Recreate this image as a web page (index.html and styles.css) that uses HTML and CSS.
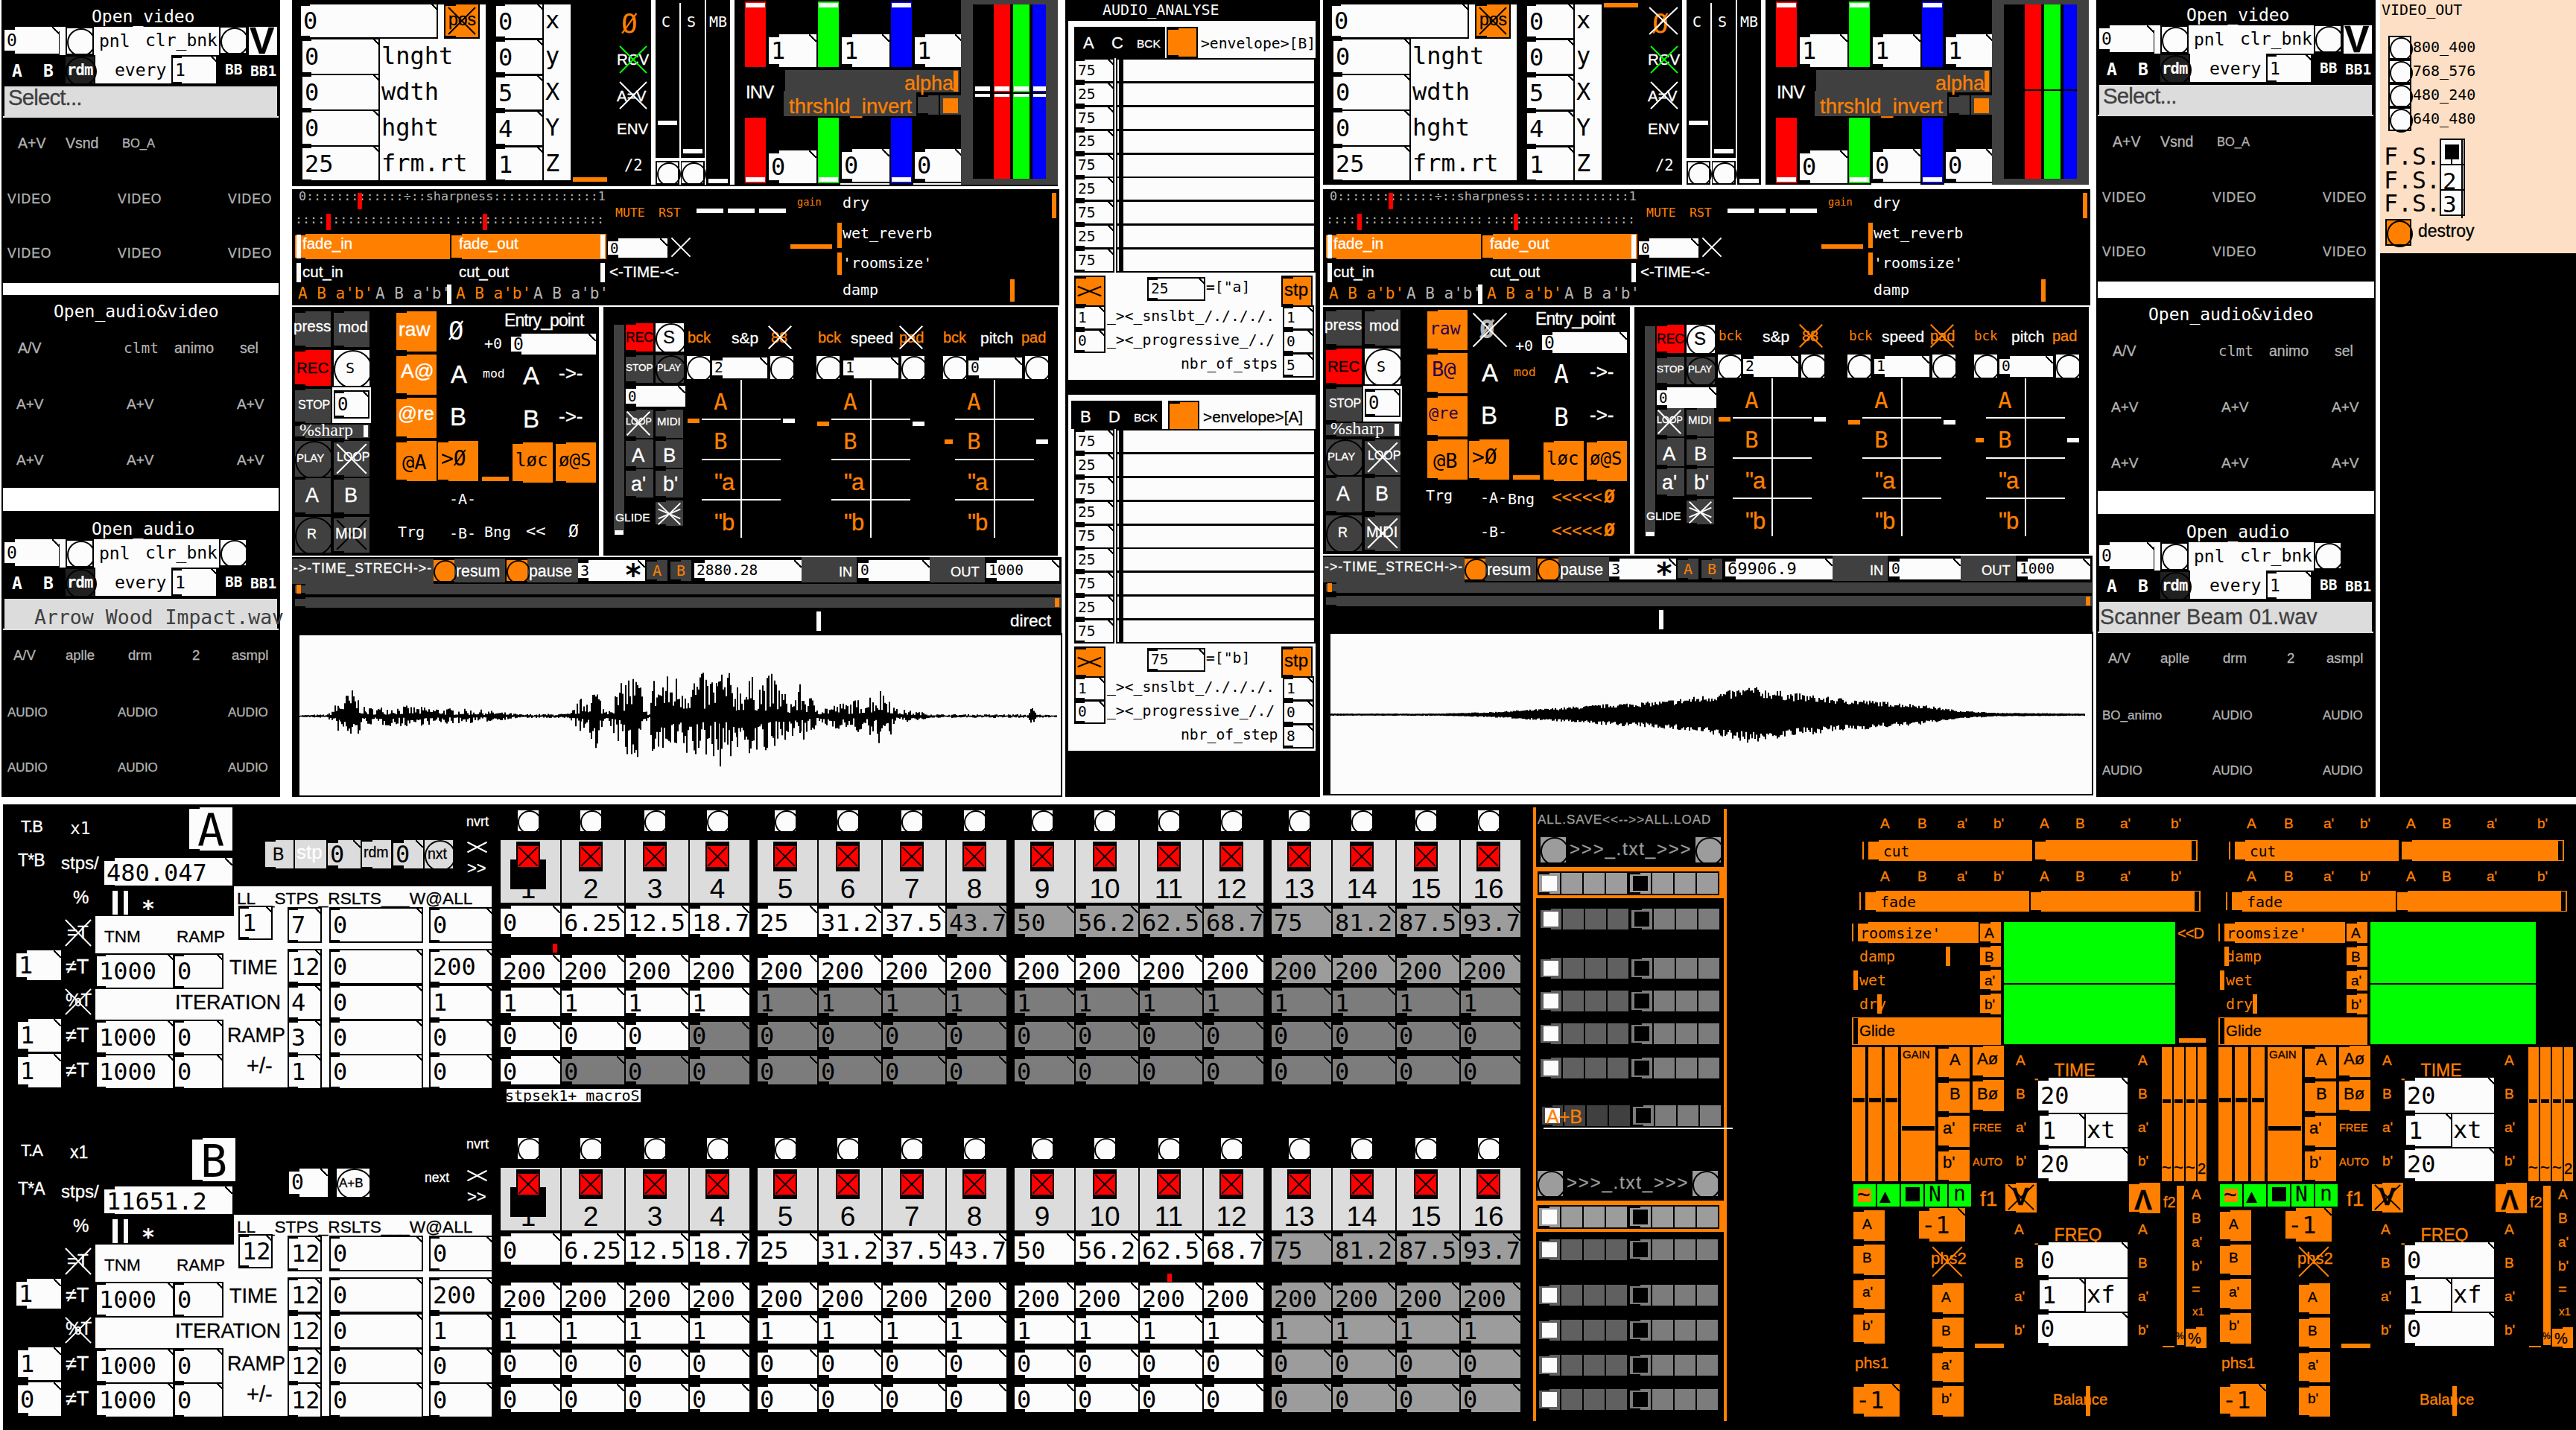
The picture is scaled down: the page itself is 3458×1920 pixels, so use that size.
FILE: index.html
```html
<!DOCTYPE html>
<html lang="en">
<head>
<meta charset="utf-8">
<title>Video / audio patch</title>
<link rel="stylesheet" href="styles.css">
</head>
<body>
<main class="desk">
  <div class="upper">
    <aside class="media" id="mediaA"></aside>
    <section class="channel" id="chanA"></section>
    <section class="analyse" id="analyse"></section>
    <section class="channel channel-b" id="chanB"></section>
    <aside class="media media-b" id="mediaB"></aside>
    <aside class="output" id="output"></aside>
  </div>
  <div class="lower">
    <div class="seqs">
      <section class="seq" id="seqA"></section>
      <section class="seq seq-b" id="seqB"></section>
    </div>
    <section class="presets" id="presets"></section>
    <section class="synth" id="synthA"></section>
    <section class="synth" id="synthB"></section>
  </div>
</main>
<script src="patch.js"></script>
</body>
</html>
```
FILE: styles.css
```css
* { box-sizing: border-box; }
body { margin: 0; background: #fff; width: 3458px; height: 1920px; overflow: hidden; }
.desk { display: flex; flex-direction: column; gap: 10px; width: 3458px; height: 1920px; overflow: hidden; }
.upper { display: flex; height: 1070px; flex: none; padding-left: 2px; }
.lower { display: flex; height: 840px; flex: none; margin-left: 4px; background: #000; }

.media { width: 374px; margin-right: 16px; display: flex; flex-direction: column; background: #000; }
.media-b { width: 375px; margin-right: 6px; }
.media .bar { background: #fff; margin: 0 2px; flex: none; }
.channel { width: 1034px; margin-right: 4px; display: flex; flex-direction: column; }
.channel .split { display: flex; gap: 6px; }
.analyse { width: 342px; margin-right: 4px; background: #000; }
.output { width: 263px; background: #000; }
.seqs { width: 2050px; display: flex; flex-direction: column; }
.seq { display: flex; height: 440px; }
.seq-b { height: 400px; }
.presets { width: 416px; }
.synth { width: 492px; }
.area { position: relative; background: #000; overflow: hidden; flex: none; }
.area.open { overflow: visible; }
.area > * { position: absolute; }

/* text */
.t { white-space: pre; line-height: 1; color: #fff; }
.s { font-family: "Liberation Sans", Arial, sans-serif; -webkit-text-stroke: .3px currentColor; }
.m, .num, .tag { font-family: "DejaVu Sans Mono", monospace; }
.serif { font-family: "Liberation Serif", serif; }
.bold { font-weight: bold; }
.ls1 { letter-spacing: 1px; }
.ls2 { letter-spacing: 1.8px; }
.lsn { letter-spacing: -.9px; }

/* fills */
.k { background-color: #000; }
.w { background-color: #fcfcfc; }
.o { background-color: #ff8000; }
.g { background-color: #404040; }
.g2 { background-color: #7c7c7c; }
.g3 { background-color: #9c9c9c; }
.g4 { background-color: #dcdcdc; }
.g5 { background-color: #606060; }
.g6 { background-color: #202020; }
.r { background-color: #f00; }
.gr { background-color: #0f0; }
.bl { background-color: #00f; }
.pe { background-color: #fcdfc4; }

/* boxes with the small inlet and outlet notches */
.pad {
  background-image: linear-gradient(#000, #000), linear-gradient(#000, #000);
  background-size: 14px 2px, 14px 2px;
  background-position: 0 0, 0 100%;
  background-repeat: no-repeat;
}
.num {
  display: flex; align-items: center; padding-left: 3px; overflow: hidden; white-space: pre; color: #000; line-height: 1;
  background-image:
    linear-gradient(#000, #000), linear-gradient(#000, #000),
    linear-gradient(to top right, transparent 43%, #000 43%, #000 57%, transparent 57%);
  background-size: 14px 4px, 14px 4px, 10px 10px;
  background-position: 0 0, 0 100%, 100% 0;
  background-origin: border-box;
  background-repeat: no-repeat;
}
.bd { border: 2px solid #000; }
.bng::after { content: ""; display: block; width: 100%; height: 100%; border: 2px solid #000; border-radius: 50%; }
.x { color: #fff; overflow: visible; }
.x line { stroke: currentColor; stroke-width: 2; }
.x.grn { color: #0f0; }

/* text and stroke colours */
.ck { color: #000; }
.co { color: #ff8000; }
.cg { color: #b4b4b4; }
.cd { color: #404040; }
.cp { color: #9c9c9c; }
.cv { color: #2d004b; }

/* step sequencer */
.bank { display: flex; gap: 11px; padding-top: 8px; }
.quad { display: grid; grid-template-columns: 80px 84px 84px 80px; column-gap: 2px; grid-template-rows: 40px 88px 66px 44px 46px 46px 38px; align-items: start; width: 334px; }
.quad .bng { width: 28px; height: 28px; justify-self: center; margin-right: 6px; }
.step { height: 84px; display: flex; flex-direction: column; align-items: center; justify-content: space-between; font: 37px/36px "Liberation Sans", Arial, sans-serif; padding: 2px 6px 0 0; }
.step .led { width: 32px; height: 40px; background: #000; padding: 6px 2px; }
.step .led svg { display: block; width: 28px; height: 28px; background: #f00; }
.led line { stroke: #000; stroke-width: 2; }
.step.on .led { box-shadow: 0 24px 0 0 #000, 8px 24px 0 0 #000, -8px 24px 0 0 #000; }
.quad .num { height: 38px; font-size: 32px; }
.quad .val { height: 42px; padding-top: 4px; }
.quad .dur { padding-top: 6px; }
.quad .itr { padding-top: 3px; }

/* preset strips */
.strip { display: flex; gap: 2px; height: 28px; }
.strip i { width: 28px; height: 28px; padding: 4px; }
.strip i:nth-child(5) { margin-left: 2px; }
.strip i b { display: block; width: 20px; height: 20px; }

/* analyser rows */
.rows { display: flex; flex-direction: column; }
.rows > div { display: flex; gap: 2px; height: 31.9px; }
.rows .num { width: 54px; font-size: 19.5px; height: 33px; }
.rows .track { width: 268px; height: 33px; padding-left: 2px; }
.rows .track i { display: block; width: 6px; height: 100%; background: #000; }
.wave { stroke: #000; stroke-width: 2; fill: none; }
```
FILE: patch.js
```js
// Small drawing kit for a patch canvas: coordinates are those of the whole desk,
// every area subtracts its own origin.
const SVG = 'http://www.w3.org/2000/svg';
function area(parent, w, h, ox, oy) {
  const el = document.createElement('div');
  el.className = 'area';
  el.style.width = w + 'px';
  el.style.height = h + 'px';
  parent.append(el);
  const put = (e, x1, y1, x2, y2) => {
    e.style.left = (x1 - ox) + 'px';
    e.style.top = (y1 - oy) + 'px';
    if (x2 !== undefined) {
      e.style.width = (x2 - x1) + 'px';
      e.style.height = (y2 - y1) + 'px';
    }
    el.append(e);
    return e;
  };
  const div = cls => {
    const e = document.createElement('div');
    e.className = cls;
    return e;
  };
  const p = {
    el, put, div,
    r: (x1, y1, x2, y2, cls) => put(div(cls), x1, y1, x2, y2),
    pad: (x1, y1, x2, y2, cls) => put(div('pad ' + cls), x1, y1, x2, y2),
    c: (x1, y1, x2, y2, cls = 'w') => put(div('bng ' + cls), x1, y1, x2, y2),
    n: (x1, y1, x2, y2, v, size = 32, cls = 'w') => {
      const e = put(div('num ' + cls), x1, y1, x2, y2);
      e.textContent = v;
      e.style.fontSize = size + 'px';
      return e;
    },
    t: (x, base, size, str, cls = 's') => {
      const e = put(div('t ' + cls), x, base - .846 * size);
      e.textContent = str;
      e.style.fontSize = size + 'px';
      return e;
    },
    x: (x1, y1, x2, y2, cls = '') => {
      const s = cross();
      s.setAttribute('class', 'x ' + cls);
      return put(s, x1, y1, x2, y2);
    }
  };
  return p;
}
function cross() {
  const s = document.createElementNS(SVG, 'svg');
  s.setAttribute('viewBox', '0 0 20 20');
  s.setAttribute('preserveAspectRatio', 'none');
  for (const [a, b] of [[1, 19], [19, 1]]) {
    const l = document.createElementNS(SVG, 'line');
    l.setAttribute('x1', 1); l.setAttribute('x2', 19);
    l.setAttribute('y1', a); l.setAttribute('y2', b);
    l.setAttribute('vector-effect', 'non-scaling-stroke');
    s.append(l);
  }
  return s;
}
const $ = id => document.getElementById(id);
function bar(parent, h) {
  const e = document.createElement('div');
  e.className = 'bar';
  e.style.height = h + 'px';
  parent.append(e);
}

/* ---------- file pickers ---------- */
function picker(p, title, tx, last) {
  p.t(tx, 30, 23, title, 'm');
  p.r(80, 36, 88, 74, 'w');
  p.n(6, 36, 80, 72, '0', 23);
  p.r(79, 42, 80, 72, 'k');
  p.c(90, 38, 124, 72);
  p.r(126, 36, 294, 74, 'w');
  p.r(128, 74, 230, 112, 'w');
  p.t(133, 63, 23, 'pnl', 'm ck');
  p.t(195, 62, 23, 'clr_bnk', 'm ck');
  p.c(296, 37, 330, 71);
  if (last) {
    p.r(334, 36, 372, 74, 'w');
    p.t(335, 72, 50, 'V', 's bold ck');
  }
  p.t(16, 103, 23, 'A', 'm bold');
  p.t(58, 103, 23, 'B', 'm bold');
  p.c(88, 76, 126, 112, 'g6');
  p.t(90, 101, 20.5, 'rdm', 'm bold lsn');
  p.t(154, 102, 23, 'every', 'm ck');
  p.n(230, 74, 292, 114, '1', 23, 'w bd');
  p.t(302, 100, 19.5, 'BB', 'm bold');
  p.t(336, 102, 19.5, 'BB1', 'm bold');
  p.r(4, 156, 374, 158, 'w');
  p.r(6, 116, 372, 158, 'g4');
}
function media(el, ox, h, file, isB) {
  let p = area(el, isB ? 375 : 374, h[0], 2, isB ? 2 : 0);
  picker(p, 'Open_video', 123, true);
  p.t(11, 141, 29.5, 'Select...', 's cd lsn');
  p.t(24, 199, 19.5, 'A+V', 's cg');
  p.t(88, 199, 19.5, 'Vsnd', 's cg');
  p.t(164, 198, 16.5, 'BO_A', 's cg');
  for (const y of [274, 347]) for (const x of [10, 158, 306]) p.t(x, y, 17.5, 'VIDEO', 's cg ls1');
  bar(el, h[1]);
  p = area(el, isB ? 375 : 374, h[2], 2, 396);
  p.t(72, 426, 23, 'Open_audio&video', 'm');
  p.t(24, 474, 19.5, 'A/V', 's cg');
  p.t(166, 474, 19.5, 'clmt', 'm cg');
  p.t(234, 474, 19.5, 'animo', 's cg');
  p.t(322, 474, 19.5, 'sel', 's cg');
  for (const y of [549, 624]) for (const x of [22, 170, 318]) p.t(x, y, 19, 'A+V', 's cg');
  bar(el, h[3]);
  p = area(el, isB ? 375 : 374, h[4], 2, -2);
  p.el.classList.add('open');
  picker(p, 'Open_audio', 123, false);
  if (isB) p.t(7, 147, 29, file, 's cd');
  else p.t(46, 150, 26.5, file, 'm cd');
  [['A/V', 18], ['aplle', 88], ['drm', 172], ['2', 258], ['asmpl', 311]].forEach(([s, x]) => p.t(x, 199, 18.5, s, 's cg'));
  for (const y of [274, 348]) for (const x of [10, 158, 306])
    p.t(x, y, 17, isB && x === 10 && y === 274 ? 'BO_animo' : 'AUDIO', 's cg');
}
media($('mediaA'), 0, [380, 16, 259, 31, 384], 'Arrow Wood Impact.wav', false);
media($('mediaB'), 0, [378, 22, 259, 31, 380], 'Scanner Beam 01.wav', true);

/* ---------- channels ---------- */
function channel(el, isB) {
  // video parameters
  let p = area(el, 1028, isB ? 248 : 250, 392, 0);
  p.r(404, 6, 652, 242, 'w');
  p.n(402, 4, 588, 52, '0', 32, 'w bd');
  p.pad(596, 4, 644, 52, 'o bd');
  p.t(602, 34, 23, 'pos', 's ck');
  p.x(600, 8, 640, 48, 'ck');
  p.r(402, 52, 406, 244, 'k');
  ['lnght', 'wdth', 'hght', 'frm.rt'].forEach((s, i) => {
    p.n(404, 51 + i * 48, 510, 101 + i * 48, i === 3 ? '25' : '0', 32, 'w bd');
    p.t(512, 86 + i * 48, 32, s, 'm ck');
  });
  p.r(666, 6, 766, 242, 'w');
  ['x', 'y', 'X', 'Y', 'Z'].forEach((s, i) => {
    p.n(664, 4 + i * 48, 730, 53 + i * 48, '00541'[i], 32, 'w bd');
    p.t(732, 38 + i * 48, 32, s, 'm ck');
  });
  p.r(402, 242, 768, 250, 'k');
  if (isB) p.r(769, 4, 815, 10, 'o'); else p.r(769, 238, 815, 244, 'o');
  p.t(834, 44, 36, 'Ø', 'm co');
  if (isB) p.x(828, 8, 870, 48);
  p.t(828, 87, 20.5, 'RCV');
  p.x(830, 60, 870, 100, 'grn');
  p.t(828, 136, 20.5, 'A=V');
  p.x(830, 108, 870, 148);
  p.t(828, 180, 20.5, 'ENV');
  p.t(838, 229, 20.5, '/2', 'm');
  p.r(874, 0, 880, 248, 'w');
  p.t(888, 36, 20, 'C', 'm'); p.t(922, 36, 20, 'S', 'm'); p.t(952, 36, 20, 'MB', 'm');
  p.r(912, 4, 914, 248, 'w'); p.r(946, 0, 948, 248, 'w'); p.r(980, 0, 986, 248, 'w');
  p.r(883, 162, 909, 168, 'w'); p.r(917, 200, 943, 206, 'w'); p.r(951, 240, 977, 246, 'w');
  p.r(880, 212, 947, 216, 'w');
  p.c(882, 218, 910, 246); p.c(915, 218, 944, 246);
  [['r', 1000], ['gr', 1098], ['bl', 1196]].forEach(([c, x], i) => {
    p.r(x, 2, x + 28, 90, c); p.r(x + 1, 4, x + 27, 10, 'w');
    p.r(x, 158, x + 28, 246, c); p.r(x + 1, 238, x + 27, 244, 'w');
    p.n(x + 32, 46, x + 96, 90, '1', 32);
    p.n(x + 32, i ? 200 : 202, x + 96, i ? 244 : 246, '0', 32);
    if (i) p.r(x + 30, 246, x + 96, 248, 'w');
  });
  p.t(1001, 132, 24, 'INV', 's lsn');
  p.r(1054, 94, 1288, 124, 'g'); p.r(1052, 122, 1230, 156, 'g');
  p.t(1214, 122, 27, 'alpha', 's co'); p.t(1059, 152, 27.5, 'thrshld_invert', 's co');
  p.pad(1232, 128, 1260, 154, 'g'); p.r(1262, 128, 1290, 154, 'g'); p.r(1266, 132, 1286, 152, 'o');
  p.r(1280, 95, 1286, 123, 'o');
  p.r(1290, 0, 1420, 248, 'g'); p.r(1306, 6, 1404, 240, 'k');
  p.r(1334, 6, 1356, 240, 'r'); p.r(1360, 6, 1382, 240, 'gr'); p.r(1386, 6, 1404, 240, 'bl');
  if (!isB) {
    p.r(1334, 124, 1404, 126, 'k');
    for (const [a, b] of [[1309, 1329], [1335, 1355], [1361, 1381], [1387, 1404]]) { p.r(a, 116, b, 122, 'w'); p.r(a, 126, b, 130, 'w'); }
  } else p.r(1334, 120, 1404, 122, 'k');
  bar(el, isB ? 6 : 4);

  // audio parameters
  p = area(el, 1030, 156, 392, 254);
  p.t(401, 269, 16.7, '0:::::::::::::÷::sharpness::::::::::::::1', 'm cg');
  p.t(396, 300, 16.7, ':::::::::::::::::::::', 'm cg');
  p.t(610, 300, 16.7, '::::::::::::::::::::', 'm cg');
  p.r(480, 259, 486, 281, 'r'); p.r(438, 287, 444, 309, 'r'); p.r(648, 287, 654, 309, 'r');
  p.pad(396, 314, 604, 348, 'o'); p.pad(606, 314, 814, 348, 'o');
  for (const x of [398, 806]) { p.r(x, 315, x + 6, 347, 'w'); p.r(x, 353, x + 6, 379, 'w'); }
  p.t(406, 334, 20.5, 'fade_in'); p.t(616, 334, 20.5, 'fade_out');
  p.t(406, 372, 20.5, 'cut_in'); p.t(616, 372, 20.5, 'cut_out');
  p.r(600, 382, 606, 408, 'w');
  for (const x of [400, 612]) { p.t(x, 402, 21, "A B a'b'", 'm co'); p.t(x + 104, 402, 21, "A B a'b'", 'm cg'); }
  p.t(826, 292, 16.5, 'MUTE', 'm co'); p.t(884, 292, 16.5, 'RST', 'm co');
  p.n(816, 320, 896, 346, '0', 19); p.x(900, 318, 928, 346);
  p.t(818, 372, 20.5, '<-TIME-<-');
  for (const x of [935, 977, 1019]) p.r(x, 280, x + 36, 286, 'w');
  p.t(1070, 276, 13.5, 'gain', 'm co');
  p.r(1061, 328, 1117, 334, 'o'); p.r(1124, 299, 1130, 333, 'o'); p.r(1124, 339, 1130, 369, 'o');
  p.t(1131, 279, 20, 'dry', 'm'); p.t(1131, 320, 20, 'wet_reverb', 'm');
  p.t(1131, 360, 20, "'roomsize'", 'm'); p.t(1131, 396, 20, 'damp', 'm');
  p.r(1412, 259, 1418, 293, 'o'); p.r(1356, 375, 1362, 405, 'o');
  bar(el, 2);

  // recorder and pitch/speed decks
  const split = document.createElement('div');
  split.className = 'split';
  el.append(split);
  const H = isB ? 332 : 334, oy = isB ? 414 : 412;
  p = area(split, 412, H, 392, oy);
  p.pad(396, 418, 444, 466, 'g'); p.pad(448, 418, 496, 466, 'g');
  p.pad(396, 470, 444, 518, 'r'); p.c(448, 470, 496, 518);
  p.pad(396, 522, 444, 568, 'g'); p.r(446, 520, 498, 568, 'w'); p.n(448, 524, 496, 562, '0', 24, 'w bd');
  p.pad(396, 570, 496, 588, 'g'); p.t(402, 585, 24, '%sharp', 'serif'); p.r(488, 571, 494, 587, 'w');
  p.c(396, 592, 444, 640, 'g'); p.pad(448, 592, 496, 640, 'g'); p.x(450, 594, 494, 638);
  p.pad(396, 642, 444, 690, 'g'); p.pad(448, 642, 496, 690, 'g');
  p.c(396, 694, 444, 742, 'g'); p.pad(448, 694, 496, 742, 'g');
  p.x(450, 696, 494, 740, isB ? '' : 'ck');
  p.t(394, 445, 20.5, 'press'); p.t(454, 446, 20.5, 'mod'); p.t(398, 501, 20.5, 'REC', 's ck');
  p.t(464, 501, 20, 'S', 'm ck'); p.t(400, 550, 16, 'STOP'); p.t(398, 620, 15, 'PLAY'); p.t(452, 620, 16, 'LOOP');
  p.t(410, 675, 27, 'A'); p.t(462, 675, 27, 'B'); p.t(412, 723, 18, 'R'); p.t(450, 723, 20, 'MIDI');
  const lab = isB ? 'm cv' : 's';
  for (const y of [418, 476, 534, 592]) p.pad(532, y, 586, y + 54, 'o');
  p.pad(588, 592, 642, 646, 'o'); p.r(647, 640, 683, 646, 'o');
  p.pad(688, 594, 742, 648, 'o'); p.pad(746, 594, 800, 648, 'o');
  const ls = isB ? 23 : 26.5;
  p.t(535, 451, ls, 'raw', lab); p.t(538, 507, isB ? 27 : 26.5, isB ? 'B@' : 'A@', lab); p.t(534, 565, ls - 1, '@re', lab);
  p.t(540, 630, 27, isB ? '@B' : '@A', 'm ck'); p.t(592, 626, 28, '>Ø', 'm ck');
  p.t(692, 626, 24, 'løc', 'm ck'); p.t(750, 626, 24, 'ø@S', 'm ck');
  p.t(602, 456, 34, 'Ø', isB ? 'm cg bold' : 'm');
  if (isB) p.x(591, 420, 641, 470);
  p.t(605, 514, 33, 'A'); p.t(604, 571, 33, 'B');
  p.t(650, isB ? 473 : 468, 20, '+0', 'm'); p.t(648, 508, 16.5, 'mod', isB ? 'm co' : 'm');
  p.t(677, 438, 23, 'Entry_point', 's lsn'); p.n(686, 448, 800, 476, '0', 23);
  p.t(702, 516, 33, 'A', isB ? 'm' : 's'); p.t(702, 574, 33, 'B', isB ? 'm' : 's');
  p.t(750, 510, 26, '->-'); p.t(750, 568, 26, '->-');
  p.t(603, 677, 20, '-A-', 'm'); p.t(603, 723, 20, '-B-', 'm');
  if (isB) {
    p.t(530, 674, 20, 'Trg', 'm'); p.t(640, 679, 20, 'Bng', 'm');
    for (const y of [677, 722]) { p.t(699, y, 22.5, '<<<<<', 'm co'); p.t(769, y, 25, 'Ø', 'm co bold'); }
  } else {
    p.t(534, 721, 20, 'Trg', 'm'); p.t(650, 721, 20, 'Bng', 'm'); p.t(706, 721, 22, '<<', 'm'); p.t(763, 721, 23, 'Ø', 'm');
  }

  p = area(split, 610, H, 810, oy);
  const d = isB ? 4 : 0;
  p.r(824, 436 + d, 838, 712 + d, 'g'); p.r(825, 712 + d, 837, 718 + d, 'w');
  p.pad(840, 434 + d, 877, 472 + d, 'r'); p.c(880, 434 + d, 918, 472 + d);
  p.pad(840, 477 + d, 877, 514 + d, 'g'); p.c(880, 477 + d, 918, 514 + d, 'g');
  p.n(840, 518 + d, 920, 546 + d, '0', 19);
  for (const y of [550, 590, 630]) for (const x of [840, 880]) p.pad(x, y, x + 37, y + 38, 'g');
  p.pad(880, 672, 917, 706, 'g');
  p.t(840, 460 + d, 17.5, 'REC', 's ck'); p.t(890, 461 + d, 24, 'S', 's ck');
  p.t(840, 498 + d, 13.5, 'STOP'); p.t(882, 498 + d, 13, 'PLAY');
  p.t(840, 571, 12.5, 'LOOP'); p.x(840, 551, 874, 586); p.t(882, 571, 15, 'MIDI');
  p.t(848, 620, 26, 'A'); p.t(890, 620, 26, 'B'); p.t(847, 660, 27, "a'"); p.t(890, 660, 27, "b'");
  p.t(826, 700, 15.5, 'GLIDE'); p.x(882, 674, 915, 706); p.x(882, 683, 915, 697);
  const cols = [
    [923, 982, 's&p', 1035, '88', 922, 956, 1034, '2', 995, 923, 562],
    [1098, 1142, 'speed', 1207, 'pad', 1096, 1132, 1210, '1', 1169, 1097, 566],
    [1266, 1316, 'pitch', 1371, 'pad', 1266, 1300, 1376, '0', 1335, 1268, 590]
  ];
  cols.forEach(([bx, nx, name, px, pn, c1, nb, c2, v, vx, th, ty], i) => {
    p.t(bx, 460, isB ? 17.5 : 20, 'bck', isB ? 'm co' : 's co'); p.t(nx, 461, 21, name);
    p.t(px, 460, 20, pn, 's co');
    if (i < 2) p.x(c2 - 4, 436, c2 + 30, 470, isB ? 'co' : '');
    p.c(c1, 478, c1 + 31, 509); p.n(nb, 480, c2 - 4, 508, v, 19.5); p.c(c2, 478, c2 + 31, 509);
    p.r(vx - 1, 510, vx + 1, 722, 'w');
    for (const y of [562, 616, 670]) p.r(vx - 53, y, vx + 53, y + 2, 'w');
    p.r(th, ty, th + (i === 2 ? 11 : 16), ty + 6, 'o'); p.r(vx + 56, ty, vx + 72, ty + 6, 'w');
    p.t(vx - 37, 550, 31, 'A', 'm co'); p.t(vx - 37, 603, 31, 'B', 'm co');
    p.t(vx - 36, 658, 31, '"a', 's co lsn'); p.t(vx - 36, 712, 31, '"b', 's co lsn');
  });
  bar(el, 2);

  // time stretch
  p = area(el, 1033, 102, 392, 748);
  p.r(392, 750, 582, 784, 'g');
  p.t(394, 770, 17.7, '->-TIME_STRECH->-', 's ls1');
  p.r(610, 750, 678, 782, 'g'); p.r(708, 750, 776, 782, 'g');
  p.c(582, 752, 610, 780, 'o'); p.c(680, 752, 708, 780, 'o');
  p.t(612, 775, 21.3, 'resum'); p.t(710, 775, 21.3, 'pause');
  p.n(776, 752, 866, 780, '3', 20); p.t(838, 786, 40, '*', 'm bold ck');
  p.pad(868, 752, 896, 780, 'g'); p.pad(900, 752, 928, 780, 'g');
  p.t(876, 773, 20, 'A', 'm co'); p.t(908, 773, 20, 'B', 'm co');
  p.n(932, 752, 1076, 780, isB ? '69906.9' : '2880.28', isB ? 22 : 19.5);
  p.r(1076, 748, 1150, 782, 'g'); p.r(1248, 748, 1322, 782, 'g');
  p.t(1126, 774, 18.3, 'IN'); p.t(1276, 774, 18.3, 'OUT');
  p.n(1152, 752, 1248, 780, '0', 19.5); p.n(1324, 752, 1422, 780, '1000', 19.5);
  p.pad(396, 784, 1424, 798, 'g'); p.pad(396, 802, 1424, 816, 'g');
  p.r(398, 785, 404, 797, 'o'); p.r(1416, 803, 1422, 815, 'o');
  if (isB) p.r(843, 821, 849, 847, 'w');
  else { p.r(1096, 821, 1102, 847, 'w'); p.t(1356, 842, 22.5, 'direct', 's'); }

  // recorded sound
  p = area(el, 1034, 220, 392, 850);
  p.r(402, 853, 1424, 1068, 'w');
  const env = isB
    ? [[1776, 1], [1930, 1], [2000, 3], [2080, 8], [2160, 14], [2230, 18], [2290, 26], [2350, 38], [2400, 30], [2450, 24], [2520, 18], [2580, 13], [2630, 5], [2680, 2], [2800, 1]].map(([x, a]) => [x - 1384, a])
    : [[402, 1], [440, 2], [455, 22], [475, 38], [490, 10], [500, 12], [540, 14], [570, 12], [650, 8], [700, 2], [765, 3], [780, 24], [800, 44], [812, 8], [832, 40], [842, 60], [860, 55], [864, 6], [872, 8], [876, 55], [930, 60], [960, 56], [965, 70], [990, 50], [1040, 58], [1060, 20], [1075, 44], [1100, 12], [1150, 22], [1190, 42], [1202, 10], [1260, 2], [1380, 2], [1386, 14], [1392, 2], [1420, 1]];
  let seed = 7, dpath = '';
  const rnd = () => (seed = (seed * 16807) % 2147483647) / 2147483647;
  for (let i = 0; i < env.length - 1; i++) {
    const [x0, a0] = env[i], [x1, a1] = env[i + 1];
    for (let x = x0; x < x1; x += 2) {
      const a = a0 + (a1 - a0) * (x - x0) / (x1 - x0), k = isB ? .6 : .12;
      const up = isB ? rnd() : rnd() ** 1.3, down = isB ? rnd() : rnd() ** 1.3;
      dpath += `M${x - 392} ${111 - a * (k + (1 - k) * up)}V${112 + a * (k + (1 - k) * down)}`;
    }
  }
  const s = document.createElementNS(SVG, 'svg'), w = document.createElementNS(SVG, 'path');
  s.setAttribute('width', 1034); s.setAttribute('height', 220);
  w.setAttribute('class', 'wave'); w.setAttribute('d', dpath);
  s.append(w);
  p.put(s, 392, 850);
}
channel($('chanA'), false);
channel($('chanB'), true);

/* ---------- envelope analyser ---------- */
(() => {
  const p = area($('analyse'), 342, 1070, 1430, 0);
  p.t(1480, 19.5, 20, 'AUDIO_ANALYSE', 'm');
  [0, 498].forEach((dy, i) => {
    const h = i ? 502 : 0;
    p.r(1434, i ? 530 : 28, 1766, 510 + dy, 'w');
    p.r(1442 - i * 4, 36 + h, 1564 - i * 4, 78 + dy, 'k');
    p.t(1454 - i * 4, 66 + h, 22, i ? 'B' : 'A'); p.t(1492 - i * 4, 66 + h, 22, i ? 'D' : 'C'); p.t(1526 - i * 4, 64 + h, 15.5, 'BCK');
    p.pad(1566 + i * 2, 36 + h, 1608 + i * 2, 78 + h, 'o bd');
    if (i) p.t(1615, 66 + h, 20.8, '>envelope>[A]', 's ck');
    else p.t(1612, 66, 19.7, '>envelope>[B]', 'm ck');
    const rows = p.div('rows');
    for (let k = 0; k < 9; k++) {
      const row = p.div(''), n = p.div('num w bd'), tr = p.div('track w bd');
      n.textContent = k % 2 ? '25' : '75';
      tr.append(document.createElement('i'));
      row.append(n, tr);
      rows.append(row);
    }
    p.put(rows, 1442, 78 + dy);
    p.pad(1442, 370 + dy, 1484, 412 + dy, 'o bd'); p.x(1445, 384 + dy, 1480, 398 + dy, 'ck');
    p.n(1540, 372 + dy, 1618, 404 + dy, i ? '75' : '25', 19.5, 'w bd');
    p.t(1619, 393 + dy, 19.7, i ? '=["b]' : '=["a]', 'm ck');
    p.pad(1720, 370 + dy, 1762, 412 + dy, 'o bd'); p.t(1724, 397 + dy, 24, 'stp', 's ck');
    ['1', '0'].forEach((v, k) => {
      p.n(1442, 410 + k * 32 + dy, 1484, 443 + k * 31 + dy, v, 19.5, 'w bd');
      p.n(1722, 410 + k * 32 + dy, 1764, 443 + k * 32 + dy, v, 19.5, 'w bd');
    });
    p.n(1722, 474 + dy, 1764, 507 + dy, i ? '8' : '5', 19.5, 'w bd');
    p.t(1486, 432 + dy, 19.7, '_><_snslbt_/./././.', 'm ck');
    p.t(1486, 464 + dy, 19.7, '_><_progressive_/./', 'm ck');
    p.t(1585, 496 + dy, 19.7, i ? 'nbr_of_step' : 'nbr_of_stps', 'm ck');
  });
})();

/* ---------- video output ---------- */
(() => {
  const p = area($('output'), 263, 1070, 3195, 0);
  p.r(3195, 0, 3458, 340, 'pe');
  p.t(3197, 20, 20, 'VIDEO_OUT', 'm ck');
  ['800_400', '768_576', '480_240', '640_480'].forEach((s, i) => {
    p.c(3206, 48 + i * 32, 3237, 80 + i * 32, 'w bd');
    p.t(3239, 70 + i * 32, 20, s, 'm ck');
  });
  p.r(3275, 186, 3309, 290, 'w bd');
  p.r(3275, 220, 3309, 222, 'k'); p.r(3275, 254, 3309, 256, 'k'); p.r(3304, 188, 3306, 293, 'k');
  p.r(3282, 194, 3301, 214, 'k'); p.r(3290, 214, 3292, 220, 'k');
  [222, 254, 285].forEach(y => p.t(3200, y, 31.5, 'F.S.', 'm ck'));
  p.t(3279, 254, 31, '2', 'm ck'); p.t(3279, 285, 31, '3', 'm ck');
  p.c(3202, 294, 3237, 330, 'o bd');
  p.t(3246, 318, 23, 'destroy', 's ck');
})();

/* ---------- step sequencers ---------- */
function sequencer(el, isB) {
  const p = area(el, 668, isB ? 400 : 440, 4, isB ? 1079 : 1080);
  const L = isB ? 'A' : 'B';
  const u = isB ? -6 : 0;
  p.t(28, 1118 + u, 22, 'T.' + L, 's lsn'); p.t(94, 1120 + u, 23, 'x1', isB ? 's' : 'm');
  const bx = isB ? 4 : 0, by = isB ? 3 : 0;
  p.pad(254 + bx, 1084 + by, 312 + bx, 1142 + by, 'w'); p.t(265 + bx, 1136 + by, 60, isB ? 'B' : 'A', 'm ck');
  p.t(24, 1163, 23, 'T*' + L, 's lsn'); p.t(82, 1167, 24, 'stps/');
  p.n(140, 1152, 312, 1192, isB ? '11651.2' : '480.047');
  p.r(140, 1189, 314, 1193, 'k');
  p.t(98, 1213, 24, '%'); p.r(151, 1196, 158, 1228, 'w'); p.r(166, 1196, 172, 1228, 'w');
  p.t(190, 1230, 30, '*', 'm bold');
  if (isB) {
    p.n(388, 1128, 440, 1166, '0', 28); p.c(452, 1128, 496, 1166); p.t(455, 1153, 17, 'A+B', 's ck');
    p.t(570, 1147, 17.5, 'next'); p.t(626, 1101, 18, 'nvrt');
  } else {
    p.pad(356, 1128, 394, 1166, 'g4'); p.r(396, 1128, 438, 1166, 'g4'); p.n(440, 1128, 484, 1166, '0', 32, 'g4');
    p.pad(486, 1128, 525, 1166, 'g4'); p.n(528, 1128, 568, 1166, '0', 32, 'g4'); p.c(570, 1128, 608, 1166, 'g4');
    p.t(366, 1155, 23, 'B', 's ck'); p.t(398, 1153, 26, 'stp'); p.t(488, 1151, 19.5, 'rdm', 's ck'); p.t(574, 1153, 19.5, 'nxt', 's ck');
    p.t(626, 1109, 18, 'nvrt');
  }
  p.x(626, 1130, 655, 1145); p.t(627, 1174, 22, '>>', 's');
  p.r(314, 1190, 660, 1460, 'w'); p.r(128, 1230, 660, 1460, 'w');
  p.t(318, 1214, 22.7, 'LL__STPS_RSLTS___W@ALL', 's ck');
  p.n(320, 1216, 366, 1262, isB ? '12' : '1', 32, 'w bd');
  const st = isB ? ['12', '12', '12', '12', '12'] : ['7', '12', '4', '3', '1'], al = ['0', '200', '1', '0', '0'];
  [1218, 1274, 1322, 1369, 1415].forEach((y, i) => {
    p.n(386, y, 432, y + 48, st[i], 32, 'w bd'); p.n(442, y, 568, y + 48, '0', 32, 'w bd'); p.n(576, y, 662, y + 48, al[i], 32, 'w bd');
  });
  p.t(140, 1266, 22.5, 'TNM', 's ck'); p.t(237, 1266, 22.5, 'RAMP', 's ck');
  [1280, 1369, 1415].forEach(y => { p.n(128, y, 234, y + 48, '1000', 32, 'w bd'); p.n(233, y, 300, y + 48, '0', 32, 'w bd'); });
  p.t(308, 1309, 27, 'TIME', 's ck'); p.t(235, 1356, 27, 'ITERATION', 's ck'); p.t(305, 1400, 27, 'RAMP', 's ck'); p.t(331, 1442, 29, '+/-', 's ck');
  p.r(128, 1461, 662, 1466, 'k'); p.r(660, 1190, 672, 1466, 'k');
  p.n(22, 1276, 82, 1316, '1'); p.n(24, 1368, 82, 1412, '1'); p.n(24, 1415, 82, 1460, isB ? '0' : '1');
  p.t(90, 1260, 24, '=T'); p.x(86, 1233, 124, 1272); p.t(88, 1351, 24, '%T', 's lsn'); p.x(86, 1326, 124, 1364);
  [1308, 1400, 1447].forEach(y => p.t(88, y, 27, '≠T', 's'));

  const bank = document.createElement('div');
  bank.className = 'bank';
  const val = ['0', '6.25', '12.5', '18.7', '25', '31.2', '37.5', '43.7', '50', '56.2', '62.5', '68.7', '75', '81.2', '87.5', '93.7'];
  const limit = isB ? [12, 12, 12, 12, 12] : [7, 12, 4, 3, 1];
  for (let q = 0; q < 4; q++) {
    const quad = document.createElement('div');
    quad.className = 'quad';
    const add = (cls, txt) => {
      const e = document.createElement('div');
      e.className = cls;
      if (txt !== undefined) e.textContent = txt;
      quad.append(e);
      return e;
    };
    for (let k = 0; k < 4; k++) add('bng w');
    for (let k = 0; k < 4; k++) {
      const n = q * 4 + k + 1, e = add('step g4' + (n === 1 ? ' on' : '')), led = document.createElement('div');
      led.className = 'led';
      led.append(cross());
      e.append(led, String(n));
    }
    const kinds = ['val ', 'dur ', 'itr ', '', 'itr '], texts = ['', '200', '1', '0', '0'];
    for (let r = 0; r < 5; r++) for (let k = 0; k < 4; k++) {
      const n = q * 4 + k;
      const off = isB || r < 2 ? 'g3' : 'g2';
      add('num ' + kinds[r] + (n < limit[r] ? 'w' : off), r ? texts[r] : val[n]);
    }
    bank.append(quad);
  }
  const b = area(el, 1382, isB ? 400 : 440, 672, 1080);
  b.put(bank, 672, 1080);
  if (isB) b.r(1567, 1270, 1573, 1281, 'r');
  else {
    b.r(742, 1267, 748, 1279, 'r');
    b.r(680, 1462, 860, 1480, 'w');
    b.t(678, 1478, 20, 'stpsek1+ macroS', 'm ck');
  }
}
sequencer($('seqA'), false);
sequencer($('seqB'), true);

/* ---------- preset strips ---------- */
(() => {
  const p = area($('presets'), 416, 840, 2054, 1080);
  p.r(2058, 1084, 2062, 1908, 'o');
  const strip = (x, y, a, b) => {
    const s = p.div('strip');
    for (let i = 0; i < 8; i++) {
      const c = document.createElement('i');
      c.className = (i % 4 ? '' : 'pad ') + (i < 4 ? a : b);
      if (i % 4 === 0) {
        const m = document.createElement('b');
        m.className = i ? 'k' : 'w';
        c.append(m);
      }
      s.append(c);
    }
    p.put(s, x, y);
  };
  p.t(2064, 1106, 17, 'ALL.SAVE<<-->>ALL.LOAD', 's cp ls1');
  [[0, 0], [-4, 448]].forEach(([dx, dy]) => {
    p.c(2068 + dx, 1124 + dy, 2102 + dx, 1158 + dy, 'g3'); p.c(2276 + dx, 1124 + dy, 2310 + dx, 1158 + dy, 'g3');
    p.t(2107 + dx, 1148 + dy, 24, '>>>_.txt_>>>', 's cp ls2');
    p.r(2062, 1164 + dy, 2314, 1206 + dy, 'o'); p.r(2064, 1170 + dy, 2308, 1202 + dy, 'k');
    strip(2066, 1172 + dy, 'g3', 'g3');
  });
  [1220, 1286, 1330, 1374, 1420].forEach(y => strip(2068, y, 'g5', 'g2'));
  [1664, 1725, 1772, 1819, 1865].forEach(y => strip(2066, y, 'g5', 'g2'));
  strip(2070, 1484, 'g', 'g2');
  p.t(2076, 1508, 25, 'A+B', 's co');
  p.r(2314, 1086, 2318, 1908, 'o');
  p.r(2072, 1514, 2326, 1516, 'w');
})();

/* ---------- synth voices ---------- */
function synth(el, isB) {
  const p = area(el, 492, 840, 2470, 1080);
  const L = ['A', 'B', "a'", "b'"], X = [2524, 2574, 2627, 2676, 2738, 2786, 2846, 2914];
  for (const y of [1112, 1183]) X.forEach((x, i) => p.t(x, y, 19, L[i % 4], 's co'));
  p.r(2500, 1130, 2502, 1154, 'o'); p.pad(2508, 1128, 2728, 1156, 'o'); p.pad(2732, 1128, 2950, 1156, 'o'); p.r(2942, 1129, 2948, 1155, 'k');
  p.r(2496, 1198, 2498, 1222, 'o'); p.pad(2504, 1196, 2724, 1224, 'o'); p.pad(2726, 1196, 2954, 1224, 'o'); p.r(2946, 1197, 2952, 1223, 'k');
  p.t(2528, 1150, 19.5, 'cut', 'm ck'); p.t(2524, 1218, 20, 'fade', 'm ck');
  p.r(2486, 1240, 2488, 1264, 'o'); p.pad(2494, 1238, 2656, 1266, 'o'); p.t(2497, 1260, 20, "roomsize'", 'm ck');
  p.t(2496, 1291, 20, 'damp', 'm co'); p.t(2496, 1323, 20, 'wet', 'm co'); p.t(2496, 1355, 20, 'dry', 'm co');
  L.forEach((s, i) => { p.pad(2658, 1238 + i * 32, 2686, 1266 + i * 32, 'o'); p.t(2664, 1259 + i * 32, 19, s, 's ck'); });
  const damp = isB ? 2494 : 2612;
  p.r(damp, 1271, damp + 6, 1297, 'o'); p.r(2488, 1303, 2494, 1329, 'o');
  const dry = isB ? 2532 : 2520;
  p.r(dry, 1335, dry + 6, 1361, 'o');
  p.r(2486, 1366, 2686, 1403, 'o'); p.r(2488, 1367, 2494, 1402, 'k'); p.t(2496, 1391, 20.5, 'Glide', 's ck');
  const edge = isB ? 2912 : 2920;
  p.r(2690, 1238, edge, 1402, 'gr'); p.r(2690, 1320, edge, 1322, 'k');
  if (!isB) { p.t(2923, 1260, 20, '<<D', 's co lsn'); p.r(2925, 1394, 2961, 1400, 'o'); }
  for (const x of [2486, 2508, 2530]) { p.r(x, 1406, x + 18, 1586, 'o'); p.r(x + 1, 1474, x + 17, 1480, 'k'); }
  p.r(2552, 1406, 2598, 1586, 'o'); p.r(2553, 1512, 2597, 1518, 'k'); p.t(2554, 1421, 15, 'GAIN', 's ck');
  L.forEach((s, i) => {
    p.pad(2602, 1406 + i * 46, 2644, 1448 + i * 46, 'o'); p.t(i > 1 ? 2608 : 2617, 1431 + i * 46, 22, s, 's ck');
    p.t(2706, 1430 + i * 45, 19, s, 's co'); p.t(2870, 1430 + i * 45, 19, s, 's co');
    p.t(2704, 1657 + i * 45, 19, s, 's co'); p.t(2870, 1657 + i * 45, 19, s, 's co');
    p.pad(2488, 1625 + i * 46, 2530, 1666 + i * 46, 'o'); p.t(2500, 1650 + i * 45.5, 19, s, 's ck');
    p.pad(2594, 1723 + i * 46, 2636, 1764 + i * 46, 'o'); p.t(2606, 1748 + i * 45.5, 19, s, 's ck');
    p.t(2942, 1610 + i * 32, 19, s, 's co');
  });
  p.pad(2648, 1404, 2690, 1446, 'o'); p.pad(2648, 1450, 2690, 1492, 'o');
  p.t(2654, 1430, 22, 'Aø', 's ck'); p.t(2654, 1477, 22, 'Bø', 's ck');
  p.t(2648, 1519, 14.5, 'FREE', 's co'); p.t(2648, 1565, 14.5, 'AUTO', 's co');
  const trio = (y, t, u, v) => {
    p.t(2732, y - 3, 23, t, 's co');
    p.r(2738, y, 2856, y + 138, 'w');
    p.n(2736, y - 1, 2858, y + 47, v); p.n(2736, y + 46, 2800, y + 93, '1', 32, 'w bd'); p.n(2736, y + 92, 2858, y + 138, v);
    p.r(2736, y + 46, 2856, y + 48, 'k'); p.r(2736, y + 92, 2856, y + 94, 'k');
    p.t(2801, y + 80, 32, u, 'm ck'); p.r(2856, y - 2, 2858, y + 138, 'k');
  };
  trio(1448, '__TIME__', 'xt', '20'); trio(1669, '__FREQ__', 'xf', '0');
  [2902, 2918, 2934, 2950].forEach((x, i) => {
    p.r(x, 1406, Math.min(x + 14, 2962), 1586, 'o'); p.r(x + 1, 1476, x + 12, 1481, 'k'); p.t(x, 1576, i === 3 ? 20 : 22, i === 3 ? '2' : '~', 's ck');
  });
  [2488, 2520, 2552, 2584, 2616].forEach(x => p.r(x, 1590, x + 30, 1620, 'gr'));
  p.r(2494, 1596, 2512, 1614, 'o'); p.t(2493, 1614, 30, '~', 's ck');
  p.t(2523, 1614, 25, '▲', 'm ck'); p.r(2558, 1594, 2577, 1613, 'k');
  p.t(2589, 1614, 28, 'N', 'm ck'); p.t(2622, 1613, 28, 'n', 'm ck');
  p.t(2658, 1620, 28, 'f1', 's co'); p.pad(2692, 1588, 2734, 1628, 'o'); p.t(2701, 1618, 34, 'V', 's bold ck'); p.x(2694, 1589, 2732, 1626, 'ck');
  p.pad(2858, 1588, 2900, 1629, 'o'); p.t(2865, 1624, 36, 'Λ', 's bold ck'); p.t(2904, 1621, 20, 'f2', 's co');
  p.r(2922, 1592, 2932, 1806, 'o'); p.t(2942, 1738, 20, '=', 's co'); p.t(2943, 1766, 15, 'x1', 's co');
  p.pad(2934, 1782, 2962, 1810, 'o'); p.t(2937, 1804, 20, '%', 's ck'); p.t(2921, 1798, 12, '%', 's ck');
  p.n(2576, 1622, 2638, 1667, '-1', 32, 'o'); p.t(2592, 1698, 22, 'phs2', 's co'); p.x(2592, 1672, 2636, 1716, 'co');
  p.t(2490, 1837, 21, 'phs1', 's co'); p.n(2488, 1858, 2550, 1902, '-1', 32, 'o');
  p.r(2651, 1804, 2690, 1810, 'o'); p.r(2903, 1807, 2919, 1809, 'o');
  p.t(2756, 1886, 20.3, 'Balance', 's co'); p.r(2800, 1861, 2806, 1901, 'o');
}
synth($('synthA'), false);
synth($('synthB'), true);
```
